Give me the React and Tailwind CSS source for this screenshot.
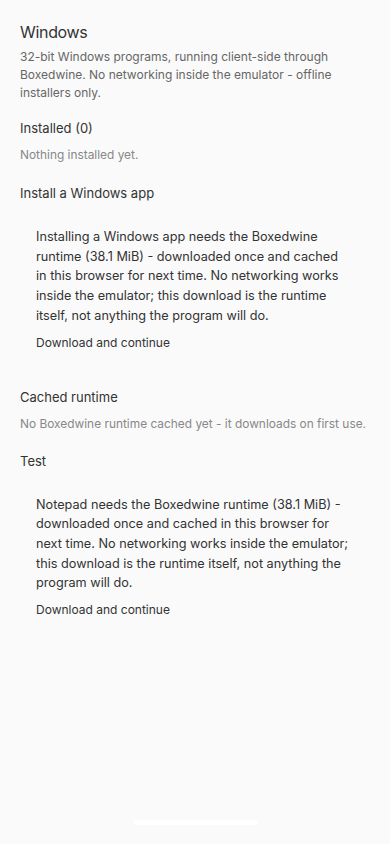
import { useState } from 'react';

const RUNTIME_NOTE = 'downloaded once and cached in\u00a0this browser for next time. No networking works inside the emulator; this download is the runtime itself, not anything the program will do.';

const RuntimeCard = ({ lead, onContinue, className = '' }) => (
  <div className={`px-4 py-4 rounded-lg ${className}`}>
    <p className="text-[12.7px] leading-[19.7px] text-[#333]">
      {lead} needs the Boxedwine runtime (38.1 MiB) - {RUNTIME_NOTE}
    </p>
    <button
      onClick={onContinue}
      className="mt-[9px] text-[12px] leading-4 text-[#333] bg-transparent"
    >
      Download and continue
    </button>
  </div>
);

const App = () => {
  const [installed] = useState([]);

  return (
    <div
      className="min-h-[844px] bg-[#fafafa] px-5 pt-[21px] flex flex-col"
      style={{ fontFamily: 'Inter, "Noto Sans", sans-serif' }}
    >
      <h1 className="text-[16px] leading-[22px] tracking-[-0.02em] text-[#333]">Windows</h1>
      <p className="mt-[5px] text-[12px] leading-[18px] text-[#666]">
        32-bit Windows programs, running client-side through Boxedwine. No networking inside the emulator - offline installers only.
      </p>

      <h2 className="mt-[17px] text-[13px] leading-[18px] text-[#333]">Installed ({installed.length})</h2>
      <p className="mt-[9px] text-[11.9px] leading-[18px] text-[#888]">Nothing installed yet.</p>

      <h2 className="mt-[20px] text-[13px] leading-[18px] text-[#333]">Install a Windows app</h2>
      <RuntimeCard lead="Installing a Windows app" className="mt-[9px]" />

      <h2 className="mt-[19px] text-[13px] leading-[18px] text-[#333]">Cached runtime</h2>
      <p className="mt-[9px] text-[11.9px] leading-[18px] text-[#888]">
        No Boxedwine runtime cached yet - it downloads on first use.
      </p>

      <h2 className="mt-[19px] text-[13px] leading-[18px] text-[#333]">Test</h2>
      <RuntimeCard lead="Notepad" className="mt-[9px]" />

      <div className="mt-auto mb-[19px] self-center w-[125px] h-[5px] rounded-full bg-white" />
    </div>
  );
};

export default App;
